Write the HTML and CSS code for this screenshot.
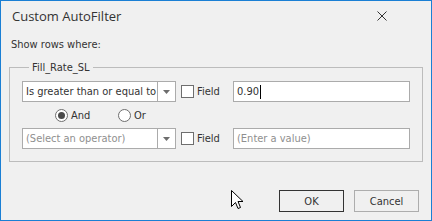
FILE: index.html
```html
<!DOCTYPE html>
<html>
<head>
<meta charset="utf-8">
<link rel="stylesheet" href="styles.css">
</head>
<body>
<div class="window">
  <div class="titlebar">
    <span class="title">Custom AutoFilter</span>
    <svg class="close" width="10" height="10" viewBox="0 0 10 10"><path d="M0.5 0.5 L9.5 9.5 M9.5 0.5 L0.5 9.5" stroke="#333" stroke-width="1" fill="none"/></svg>
  </div>
  <div class="body">
    <div class="caption">Show rows where:</div>
    <fieldset class="group">
      <legend>Fill_Rate_SL</legend>
      <div class="rows">
        <div class="row">
          <div class="combo">
            <span class="combo-text">Is greater than or equal to</span>
            <span class="combo-btn"><svg width="7" height="4" viewBox="0 0 7 4"><path d="M0 0 H7 L3.5 4 Z" fill="#6d6d6d"/></svg></span>
          </div>
          <label class="check"><span class="box"></span><span>Field</span></label>
          <div class="textbox">0.90<span class="caret"></span></div>
        </div>
        <div class="radios">
          <label class="radio"><span class="dot checked"></span><span>And</span></label>
          <label class="radio"><span class="dot"></span><span>Or</span></label>
        </div>
        <div class="row">
          <div class="combo">
            <span class="combo-text placeholder">(Select an operator)</span>
            <span class="combo-btn"><svg width="7" height="4" viewBox="0 0 7 4"><path d="M0 0 H7 L3.5 4 Z" fill="#6d6d6d"/></svg></span>
          </div>
          <label class="check"><span class="box"></span><span>Field</span></label>
          <div class="textbox placeholder">(Enter a value)</div>
        </div>
      </div>
    </fieldset>
  </div>
  <div class="footer">
    <button class="btn default">OK</button>
    <button class="btn">Cancel</button>
  </div>
  <svg class="cursor" width="13" height="21" viewBox="0 0 13 21"><path d="M0.5 0.5 L0.5 16.5 L4.5 12.5 L7 18.5 L9.5 17.5 L7 11.5 L12 11.5 Z" fill="#fff" stroke="#000" stroke-width="1" stroke-linejoin="miter"/></svg>
</div>
</body>
</html>
```

FILE: styles.css
```css
* { box-sizing: border-box; }
html, body { margin: 0; padding: 0; }
body { width: 432px; height: 221px; overflow: hidden; font-family: "DejaVu Sans Condensed", "Liberation Sans", sans-serif; font-size: 11px; color: #333; }
.window {
  position: relative;
  width: 432px; height: 221px;
  border: 1px solid #1a7fd4;
  background: #f0f0f0;
  display: flex; flex-direction: column;
}
.titlebar {
  height: 30px;
  display: flex; align-items: center; justify-content: space-between;
  padding: 0 44px 0 11px;
}
.title { font-family: "Open Sans", sans-serif; font-size: 13px; color: #333; }
.close { display: block; }
.body { padding: 6px 8px 0 8px; }
.caption { height: 16px; line-height: 16px; padding-left: 2px; }
.group {
  margin: 7px 0 0 0;
  padding: 0 12px 12px 12px;
  border: 1px solid #bcbcbc;
}
.group legend { margin-left: 7px; padding: 0 3px; line-height: 15px; }
.rows { padding-top: 6px; display: flex; flex-direction: column; }
.row { display: flex; align-items: center; height: 21px; }
.combo {
  width: 154px; height: 21px;
  border: 1px solid #ababab; background: #fff;
  display: flex;
}
.combo-text { flex: 1; padding-left: 3px; line-height: 19px; white-space: nowrap; overflow: hidden; }
.combo-btn { width: 18px; border-left: 1px solid #ababab; display: flex; align-items: center; justify-content: center; }
.placeholder { color: #8f8f8f; }
.check { display: flex; align-items: center; margin-left: 5px; width: 52px; }
.box { width: 13px; height: 13px; border: 1px solid #6e6e6e; background: #fff; margin-right: 3px; }
.textbox {
  width: 177px; height: 21px;
  border: 1px solid #ababab; background: #fff;
  padding-left: 3px; line-height: 19px;
  display: flex; align-items: center;
}
.caret { width: 1px; height: 14px; background: #000; margin-left: 1px; }
.radios { height: 26px; display: flex; align-items: center; padding-left: 33px; }
.radio { display: flex; align-items: center; width: 63px; }
.dot { width: 13px; height: 13px; border-radius: 50%; border: 1px solid #6e6e6e; background: #fff; margin-right: 3px; position: relative; }
.dot.checked::after { content: ""; position: absolute; left: 2px; top: 2px; width: 7px; height: 7px; border-radius: 50%; background: #4a4a4a; }
.footer { margin-top: auto; display: flex; justify-content: flex-end; gap: 10px; padding: 0 12px 8px 0; }
.btn {
  width: 65px; height: 22px;
  border: 1px solid #adadad; background: #f0f0f0;
  font-family: "DejaVu Sans Condensed", "Liberation Sans", sans-serif; font-size: 11px; color: #333;
  padding: 0;
}
.btn.default { border-color: #333; }
.cursor { position: absolute; left: 230px; top: 189px; }
```
